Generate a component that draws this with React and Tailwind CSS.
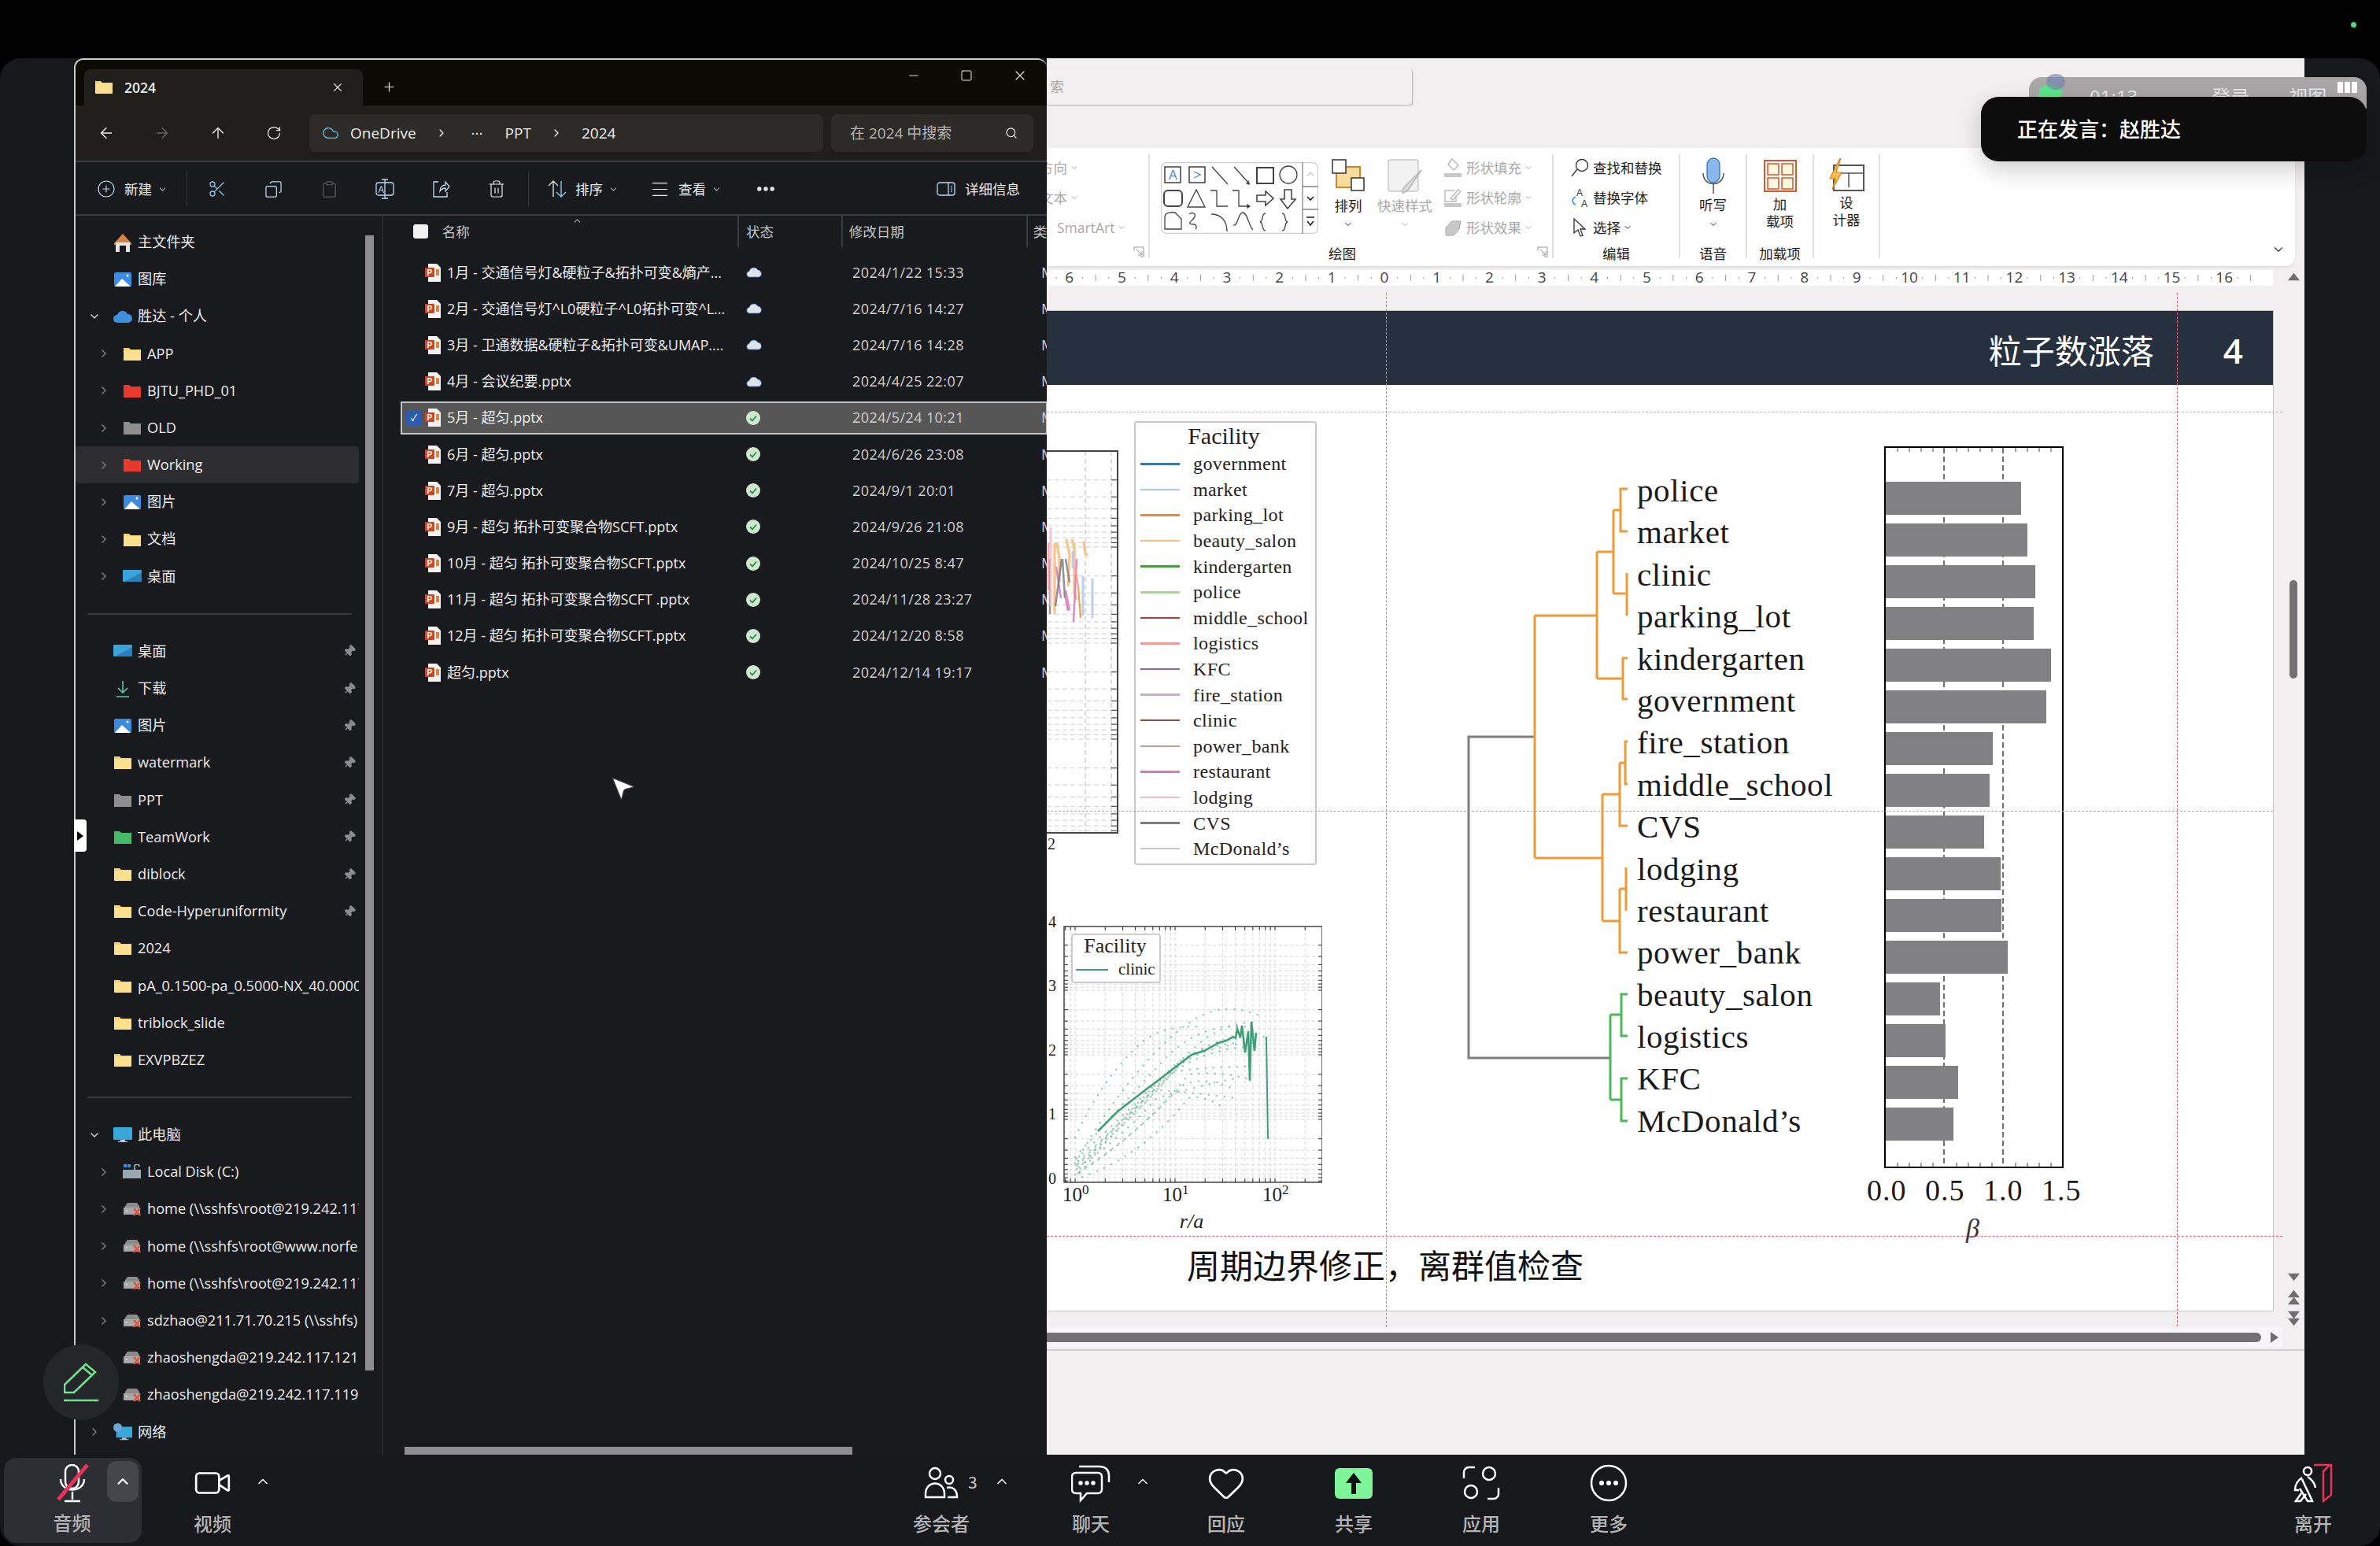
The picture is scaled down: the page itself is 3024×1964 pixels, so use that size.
import React from 'react';
import {
  ArrowLeft, ArrowRight, ArrowUp, RotateCw, Cloud, ChevronRight, ChevronDown, ChevronUp, X, Plus, Minus, Square, Search,
  CirclePlus, Scissors, Copy, Clipboard, Trash2, Menu, Ellipsis, Pin, Video, Heart, MousePointer2,
} from 'lucide-react';

const FOLDER = { y: '#f5cf6c', r: '#e8392f', g: '#8f8e8f', t: '#47b868' };

const Folder = ({ c = 'y', w = 22 }) => (
  <svg width={w} height={w * 0.78} viewBox="0 0 22 17" className="shrink-0">
    <path d="M0 1h7l2 2h13v14H0z" fill={FOLDER[c]} />
    <path d="M0 4h22v13H0z" fill={c === 'y' ? '#fbe08f' : FOLDER[c]} />
  </svg>
);

const Pic = () => (
  <svg width="22" height="20" viewBox="0 0 22 20">
    <rect width="22" height="18" y="1" rx="2" fill="#3d8be0" />
    <path d="M1 19l9-10 11 10z" fill="#fff" />
    <circle cx="17" cy="5" r="1.5" fill="#fff" />
  </svg>
);
const Desk = () => (
  <svg width="24" height="16" viewBox="0 0 24 16">
    <rect width="24" height="15" rx="1" fill="#3ba3dc" />
    <path d="M2 15L24 3v12z" fill="#2a7fc0" />
  </svg>
);
const Home = () => (
  <svg width="24" height="24" viewBox="0 0 24 24">
    <path d="M12 1L1 13v2h22v-2z" fill="#d9823f" />
    <path d="M3 12h18v12h-5v-8H8v8H3z" fill="#e8e4e2" />
  </svg>
);
const OneCloud = () => (
  <svg width="24" height="18" viewBox="0 0 24 18">
    <path d="M5 17a5 5 0 0 1 0-10 7 7 0 0 1 13-1 5.500 5.500 0 0 1 1 11z" fill="#3f8fe0" />
  </svg>
);
const Pc = () => (
  <svg width="24" height="20" viewBox="0 0 24 20">
    <rect width="24" height="16" rx="1" fill="#39a6dc" />
    <path d="M9 16h6v2h3v1H6v-1h3z" fill="#bcd" />
  </svg>
);
const Net = () => (
  <svg width="26" height="24" viewBox="0 0 26 24">
    <rect x="4" y="5" width="22" height="15" fill="#39a6dc" />
    <path d="M12 20h6v2h3v1H9v-1h3z" fill="#bcd" />
    <circle cx="6" cy="6" r="6" fill="#6aa8d8" />
  </svg>
);
const Dl = () => (
  <svg width="20" height="22" viewBox="0 0 20 22" fill="none" stroke="#56c79b" strokeWidth="1.6">
    <path d="M10 1v14M4 10l6 6 6-6M2 21h16" />
  </svg>
);
const Drive = ({ bad = true }) => (
  <svg width="24" height="20" viewBox="0 0 24 20">
    <path d="M3 6l3-4h12l3 4v11H3z" fill="#8a8a8a" />
    <rect x="1" y="8" width="21" height="9" fill="#a8a8a8" />
    <circle cx="5" cy="12" r="1" fill="#ddd" />
    {bad ? <path d="M14 9l8 9M22 9l-8 9" stroke="#d9573f" strokeWidth="2.6" /> : null}
  </svg>
);
const CDrive = () => (
  <svg width="24" height="20" viewBox="0 0 24 20">
    <rect x="1" y="0" width="4" height="4" fill="#3d8be0" />
    <rect x="6" y="0" width="4" height="4" fill="#3d8be0" />
    <rect x="0" y="7" width="23" height="11" fill="#9aa7b0" />
    <circle cx="4" cy="12" r="1" fill="#4ade80" />
    <path d="M15 7V3a3 3 0 0 1 6 0" fill="none" stroke="#9ccbe8" strokeWidth="1.5" />
  </svg>
);
const Ppt = () => (
  <svg width="20" height="23" viewBox="0 0 20 23" className="shrink-0">
    <path d="M4 0h11l5 5v18H4z" fill="#f4f1ee" />
    <rect y="5" width="12" height="12" rx="1" fill="#c8472b" />
    <text x="2.500" y="15" fontSize="10" fontWeight="700" fill="#fff" fontFamily="Liberation Sans">P</text>
    <rect x="14" y="7" width="4" height="8" fill="#e0833f" />
  </svg>
);
const CloudState = () => (
  <svg width="20" height="14" viewBox="0 0 20 14">
    <path d="M4 13a3.800 3.800 0 0 1 0-7.500 6 6 0 0 1 11-1.500 4.600 4.600 0 0 1 1 9z" fill="#dfe4ec" stroke="#3f78c8" strokeWidth="0.8" />
  </svg>
);
const OkState = () => (
  <svg width="18" height="18" viewBox="0 0 18 18">
    <circle cx="9" cy="9" r="9" fill="#cfe6cf" />
    <path d="M5 9.500l3 3 5-6" fill="none" stroke="#2c8f4e" strokeWidth="1.800" />
  </svg>
);

const NAV1 = [
  { t: '主文件夹', i: <Home />, flat: true },
  { t: '图库', i: <Pic />, flat: true },
  { t: '胜达 - 个人', i: <OneCloud />, open: true },
  { t: 'APP', i: <Folder />, l: 1 },
  { t: 'BJTU_PHD_01', i: <Folder c="r" />, l: 1 },
  { t: 'OLD', i: <Folder c="g" />, l: 1 },
  { t: 'Working', i: <Folder c="r" />, l: 1, active: true },
  { t: '图片', i: <Pic />, l: 1 },
  { t: '文档', i: <Folder />, l: 1 },
  { t: '桌面', i: <Desk />, l: 1 },
];
const NAV2 = [
  { t: '桌面', i: <Desk />, pin: true },
  { t: '下载', i: <Dl />, pin: true },
  { t: '图片', i: <Pic />, pin: true },
  { t: 'watermark', i: <Folder />, pin: true },
  { t: 'PPT', i: <Folder c="g" />, pin: true },
  { t: 'TeamWork', i: <Folder c="t" />, pin: true },
  { t: 'diblock', i: <Folder />, pin: true },
  { t: 'Code-Hyperuniformity', i: <Folder />, pin: true },
  { t: '2024', i: <Folder /> },
  { t: 'pA_0.1500-pa_0.5000-NX_40.0000', i: <Folder /> },
  { t: 'triblock_slide', i: <Folder /> },
  { t: 'EXVPBZEZ', i: <Folder /> },
];
const NAV3 = [
  { t: '此电脑', i: <Pc />, open: true },
  { t: 'Local Disk (C:)', i: <CDrive />, l: 1 },
  { t: 'home (\\\\sshfs\\root@219.242.117.121)', i: <Drive />, l: 1 },
  { t: 'home (\\\\sshfs\\root@www.norfe.cn)', i: <Drive />, l: 1 },
  { t: 'home (\\\\sshfs\\root@219.242.117.119)', i: <Drive />, l: 1 },
  { t: 'sdzhao@211.71.70.215 (\\\\sshfs)', i: <Drive />, l: 1 },
  { t: 'zhaoshengda@219.242.117.121 (\\\\sshfs)', i: <Drive />, l: 1, noArrow: true },
  { t: 'zhaoshengda@219.242.117.119 (\\\\sshfs)', i: <Drive />, l: 1, noArrow: true },
  { t: '网络', i: <Net /> },
];

const FILES = [
  ['1月 - 交通信号灯&硬粒子&拓扑可变&熵产...', '2024/1/22 15:33'],
  ['2月 - 交通信号灯^L0硬粒子^L0拓扑可变^L...', '2024/7/16 14:27'],
  ['3月 - 卫通数据&硬粒子&拓扑可变&UMAP....', '2024/7/16 14:28'],
  ['4月 - 会议纪要.pptx', '2024/4/25 22:07'],
  ['5月 - 超匀.pptx', '2024/5/24 10:21', true],
  ['6月 - 超匀.pptx', '2024/6/26 23:08'],
  ['7月 - 超匀.pptx', '2024/9/1 20:01'],
  ['9月 - 超匀 拓扑可变聚合物SCFT.pptx', '2024/9/26 21:08'],
  ['10月 - 超匀 拓扑可变聚合物SCFT.pptx', '2024/10/25 8:47'],
  ['11月 - 超匀 拓扑可变聚合物SCFT .pptx', '2024/11/28 23:27'],
  ['12月 - 超匀 拓扑可变聚合物SCFT.pptx', '2024/12/20 8:58'],
  ['超匀.pptx', '2024/12/14 19:17'],
];

const NavRow = ({ t, i, l = 0, open, pin, active, noArrow, flat }) => (
  <div className={`relative flex h-[47.2px] w-[360px] shrink-0 items-center overflow-hidden rounded-sm ${l ? 'pl-[28px]' : 'pl-[16px]'} ${active ? 'bg-[#2d2d30]' : ''}`}>
    <span className="flex w-[16px] shrink-0 justify-center">
      {flat || noArrow ? null : open ? <ChevronDown size={18} strokeWidth={2.5} color="#c4c4c4" /> : <ChevronRight size={18} strokeWidth={2.5} color="#777" />}
    </span>
    <span className="ml-[16px] flex w-[24px] shrink-0 justify-center">{i}</span>
    <span className="ml-[7px] whitespace-nowrap text-[18.2px] text-[#ececec]">{t}</span>
    {pin ? <Pin size={16} fill="#8c8c8c" color="#8c8c8c" className="absolute left-[340px] rotate-45" /> : null}
  </div>
);

const Explorer = () => (
  <div className="relative flex h-full w-[1236px] shrink-0 flex-col overflow-hidden rounded-tl-xl rounded-tr-xl border-l-2 border-t-2 border-[#c9c9c9] bg-[#191a1e] text-[#ececec]">
    <div className="flex h-[58px] shrink-0 items-end bg-[#0c0a05] pl-[11px]">
      <div className="flex h-[46px] w-[354px] items-center rounded-t-lg bg-[#201e1b] pl-[14px]">
        <Folder />
        <span className="ml-[15px] text-[17.5px] font-semibold">2024</span>
        <X size={18} className="ml-[222px]" strokeWidth={1.5} />
      </div>
      <Plus size={19} className="mb-[14px] ml-[24px]" strokeWidth={1.5} />
      <div className="mb-[28px] ml-auto flex items-center gap-[50px] pr-[24px]">
        <Minus size={18} strokeWidth={1.2} />
        <Square size={16} strokeWidth={1.5} />
        <X size={20} strokeWidth={1.4} />
      </div>
    </div>
    <div className="flex h-[72px] shrink-0 items-center border-b-2 border-[#3a3a3a] bg-[#201e1b] pl-[28px]">
      <ArrowLeft size={22} strokeWidth={1.5} />
      <ArrowRight size={22} strokeWidth={1.5} color="#666" className="ml-[49px]" />
      <ArrowUp size={22} strokeWidth={1.5} className="ml-[49px]" />
      <RotateCw size={20} strokeWidth={1.5} className="ml-[50px]" />
      <div className="ml-[35px] flex h-[48px] w-[653px] items-center rounded-lg bg-[#2d2b28] pl-[16px] text-[19px]">
        <Cloud size={22} color="#6cc0e8" strokeWidth={1.5} />
        <span className="ml-[14px]">OneDrive</span>
        <ChevronRight size={16} className="ml-[24px]" />
        <span className="ml-[30px]">···</span>
        <span className="ml-[28px]">PPT</span>
        <ChevronRight size={16} className="ml-[24px]" />
        <span className="ml-[24px]">2024</span>
      </div>
      <div className="ml-[10px] flex h-[48px] w-[257px] items-center rounded-lg bg-[#2d2b28] pl-[24px] text-[19px] text-[#b4b4b4]">
        在 2024 中搜索
        <Search size={16} className="ml-auto mr-[20px]" color="#ddd" />
      </div>
    </div>
    <div className="flex h-[68px] shrink-0 items-center border-b-2 border-[#3a3a3a] pl-[27px] pt-[2px] text-[17.5px]">
      <CirclePlus size={24} strokeWidth={1.2} color="#b8dcf0" />
      <span className="ml-[11px]">新建</span>
      <ChevronDown size={13} className="ml-[7px]" color="#aaa" />
      <span className="ml-[24px] h-[44px] w-px bg-[#3a3a3a]" />
      <Scissors size={24} strokeWidth={1.3} color="#8cc4ea" className="ml-[26px]" />
      <Copy size={23} strokeWidth={1.3} color="#b8dcf0" className="ml-[48px] -scale-x-100" />
      <Clipboard size={23} strokeWidth={1.3} color="#55585e" className="ml-[48px]" />
      <svg width="26" height="26" viewBox="0 0 26 26" fill="none" stroke="#b8dcf0" strokeWidth="1.300" className="ml-[46px]">
        <rect x="2" y="5" width="22" height="16" rx="3" />
        <path d="M13 1v24M9 1h8M9 25h8" />
        <text x="4.500" y="18" fontSize="12" stroke="none" fill="#b8dcf0">A</text>
      </svg>
      <svg width="24" height="24" viewBox="0 0 24 24" fill="none" stroke="#b8dcf0" strokeWidth="1.300" className="ml-[46px]">
        <path d="M9 3H3v19h17v-6M11 15c0-6 4-8 7-8V3l5 6-5 6v-4c-3 0-5 1-7 4z" />
      </svg>
      <Trash2 size={24} strokeWidth={1.2} className="ml-[47px]" />
      <span className="ml-[28px] h-[44px] w-px bg-[#3a3a3a]" />
      <svg width="26" height="24" viewBox="0 0 26 24" fill="none" strokeWidth="1.400" className="ml-[23px]">
        <path d="M8 22V2M2 8l6-6 6 6" stroke="#e0e0e0" />
        <path d="M18 2v20M12 16l6 6 6-6" stroke="#8cc4ea" />
      </svg>
      <span className="ml-[10px]">排序</span>
      <ChevronDown size={13} className="ml-[7px]" color="#aaa" />
      <Menu size={27} strokeWidth={1.1} className="ml-[39px]" />
      <span className="ml-[10px]">查看</span>
      <ChevronDown size={13} className="ml-[7px]" color="#aaa" />
      <Ellipsis size={28} strokeWidth={2.6} className="ml-[42px]" />
      <svg width="24" height="18" viewBox="0 0 24 18" fill="none" stroke="#b8dcf0" strokeWidth="1.300" className="ml-[203px]">
        <rect x="1" y="1" width="22" height="16" rx="3" />
        <path d="M15 1v16" />
        <path d="M18 6h2M18 9h2M18 12h2" stroke="#8cc4ea" />
      </svg>
      <span className="ml-[12px]">详细信息</span>
    </div>
    <div className="flex min-h-0 flex-1">
      <div className="relative flex w-[368px] shrink-0 flex-col pt-[10px]">
        {NAV1.map((n) => <NavRow key={n.t + (n.l || 0)} {...n} />)}
        <div className="my-[23px] ml-[15px] h-[2px] w-[335px] shrink-0 bg-[#3a3a3a]" />
        {NAV2.map((n) => <NavRow key={n.t} {...n} flat />)}
        <div className="my-[23px] ml-[15px] h-[2px] w-[335px] shrink-0 bg-[#3a3a3a]" />
        {NAV3.map((n) => <NavRow key={n.t} {...n} />)}
      </div>
      <div className="mt-[25px] h-[1442px] w-[11px] shrink-0 bg-[#8f8d90]" />
      <div className="ml-[10px] w-[2px] shrink-0 bg-[#2a2a2d]" />
      <div className="flex min-w-0 flex-1 flex-col">
        <div className="relative flex h-[40px] shrink-0 items-center text-[17.5px] text-[#c4c4c4]">
          <span className="ml-[38px] h-[18px] w-[19px] rounded-[3px] bg-[#f2f2f2]" />
          <span className="ml-[18px] w-[382px]">名称</span>
          <span className="h-full w-[134px] border-l-2 border-[#3a3a3a] pl-[9px] leading-[40px]">状态</span>
          <span className="h-full w-[239px] border-l-2 border-[#3a3a3a] pl-[8px] leading-[40px]">修改日期</span>
          <span className="h-full overflow-hidden border-l-2 border-[#3a3a3a] pl-[7px] leading-[40px]">类</span>
          <ChevronUp size={13} color="#aaa" className="absolute left-[240px] top-0" />
        </div>
        <div className="mt-[9px] flex flex-1 flex-col">
          {FILES.map(([name, date, sel], idx) => (
            <div key={name} className="flex h-[46.200px] shrink-0 items-center pl-[23px]">
              <div className={`flex h-[40px] w-full items-center whitespace-nowrap text-[18px] ${sel ? 'bg-[#565656] outline-2 -outline-offset-1 outline-[#c4c4c4]' : ''}`}>
                <span className="ml-[6px] flex h-[20px] w-[20px] shrink-0 items-center justify-center rounded-[4px]">
                  {sel ? <span className="flex h-[20px] w-[20px] items-center justify-center rounded-[4px] bg-[#2a5db0] text-[12px] text-white">✓</span> : null}
                </span>
                <span className="ml-[4px]"><Ppt /></span>
                <span className="ml-[8px] w-[372px] shrink-0 overflow-hidden text-[#ececec]">{name}</span>
                <span className="ml-[8px] flex w-[135px] shrink-0">{idx < 4 ? <CloudState /> : <OkState />}</span>
                <span className="w-[240px] shrink-0 tracking-[0.4px] text-[#cfcfcf]">{date}</span>
                <span className="text-[#cfcfcf]">M</span>
              </div>
            </div>
          ))}
        </div>
        <div className="ml-[27px] h-[10px] w-[569px] shrink-0 bg-[#8f8d90]" />
      </div>
    </div>
  </div>
);

const Shapes = () => (
  <svg width="200" height="91" viewBox="0 0 200 91" fill="none" stroke="#444" strokeWidth="1.300">
    <rect x="0.500" y="0.500" width="199" height="90" rx="7" stroke="#cfcfcf" />
    <rect x="5" y="6" width="20" height="20" stroke="#222" />
    <text x="10" y="22" fontSize="16" fill="#3d8be0" stroke="none" fontFamily="Liberation Sans">A</text>
    <rect x="36" y="6" width="20" height="20" stroke="#222" />
    <path d="M42 12l8 4-8 4" stroke="#3d8be0" />
    <path d="M65 6l20 22M93 6l20 22M113 28l-4-1 3-3" />
    <rect x="122" y="7" width="21" height="20" strokeWidth="2" />
    <circle cx="162" cy="16" r="11" />
    <rect x="4" y="36" width="23" height="20" rx="5" strokeWidth="2" />
    <path d="M34 57l11-22 11 22zM63 36h8v20h14M91 36h8v20h14M113 56l-3-2v4z" />
    <path d="M122 42h11v-5l10 9-10 9v-5h-11zM157 35h9v12h5l-10 12-9-12h5z" strokeWidth="1.600" />
    <path d="M5 70c0-5 4-6 8-6h5l8 8v13H5zM36 66c5-3 10 0 6 5-4 5-10 8 0 8 3 0 4 4 2 6M64 66c12 0 20 8 20 22M92 80c6 2 6-16 12-16s8 18 13 22M133 65c-6 0-2 10-7 11 5 1 1 11 7 11M154 65c6 0 2 10 7 11-5 1-1 11-7 11" />
    <path d="M180 0v91M180 31h20M180 60h20" stroke="#888" />
    <path d="M186 18l4-5 4 5" stroke="#ccc" />
    <path d="M186 44l4 4 4-4" stroke="#222" strokeWidth="1.600" />
    <path d="M185 70h10M186 75l4 5 4-5" stroke="#222" strokeWidth="1.600" />
  </svg>
);

const RGroup = ({ w, label, labelPad = 0, children, launcher, noBorder }) => (
  <div className={`relative flex h-[132px] shrink-0 flex-col ${noBorder ? '' : 'border-r-2 border-[#e2e0e0]'}`} style={{ width: w }}>
    <div className="flex min-h-0 flex-1">{children}</div>
    <div className="h-[24px] text-center text-[17.500px] leading-[36px] text-[#222]" style={{ paddingRight: labelPad }}>{label}</div>
    {launcher ? (
      <svg width="14" height="14" viewBox="0 0 14 14" fill="none" stroke="#999" className="absolute bottom-[1px] right-[5px]">
        <path d="M1 5V1h12v12H9M4 4l7 7M11 6v5H6" />
      </svg>
    ) : null}
  </div>
);

const RowCmd = ({ icon, text, dim, chev }) => (
  <div className={`flex h-[38px] items-center whitespace-nowrap text-[17.500px] ${dim ? 'text-[#a8a8a8]' : 'text-[#222]'}`}>
    {icon}
    <span className="ml-[6px]">{text}</span>
    {chev ? <ChevronDown size={12} className="ml-[3px]" /> : null}
  </div>
);

const Ribbon = () => (
  <div className="relative flex h-[150px] w-[1586px] items-start rounded-br-xl bg-white py-[8px] pb-[10px] shadow-[0_2px_3px_#0001]">
    <RGroup w={131} launcher>
      <div className="-ml-[15px] -mt-[2px]">
        <RowCmd dim chev text="方向" icon={null} />
        <RowCmd dim chev text="文本" icon={null} />
        <div className="ml-[22px]"><RowCmd dim chev text="SmartArt" icon={null} /></div>
      </div>
    </RGroup>
    <RGroup w={513} label="绘图" labelPad={22} launcher>
      <div className="ml-[14px] mt-[10px]"><Shapes /></div>
      <div className="ml-[13px] flex w-[50px] flex-col items-center text-[17.500px] text-[#222]">
        <svg width="42" height="42" viewBox="0 0 42 42" className="mt-[6px]">
          <rect x="6" y="10" width="30" height="26" fill="#f8dc9c" stroke="#d9822b" strokeWidth="2" />
          <rect x="1" y="1" width="17" height="17" fill="#fff" stroke="#333" strokeWidth="1.500" />
          <rect x="25" y="24" width="16" height="16" fill="#fff" stroke="#333" strokeWidth="1.500" />
        </svg>
        <span className="mt-[4px]">排列</span>
        <ChevronDown size={12} className="mt-[5px]" />
      </div>
      <div className="ml-[9px] flex w-[76px] flex-col items-center text-[17.500px] text-[#a8a8a8]">
        <svg width="46" height="46" viewBox="0 0 46 46" className="mt-[6px]" fill="none" stroke="#c8c8c8" strokeWidth="1.500">
          <rect x="2" y="1" width="38" height="40" rx="3" fill="#f2f2f2" />
          <path d="M44 14L28 38c-2 3-8 5-8 5s0-6 3-8z" fill="#ddd" stroke="#b5b5b5" />
        </svg>
        <span>快速样式</span>
        <ChevronDown size={12} className="mt-[5px]" />
      </div>
      <div className="-mt-[2px] ml-[12px]">
        <RowCmd dim chev text="形状填充" icon={<svg width="22" height="24" viewBox="0 0 22 24"><path d="M10 1l8 8-6 6-7-7z" fill="none" stroke="#bbb" strokeWidth="1.500" /><rect y="19" width="22" height="5" fill="#c8c8c8" /></svg>} />
        <RowCmd dim chev text="形状轮廓" icon={<svg width="22" height="24" viewBox="0 0 22 24"><path d="M1 3h12M1 3v14h14v-8M8 13l10-11 3 2-10 11z" fill="none" stroke="#bbb" strokeWidth="1.400" /><rect y="19" width="22" height="5" fill="#c8c8c8" /></svg>} />
        <RowCmd dim chev text="形状效果" icon={<svg width="22" height="24" viewBox="0 0 22 24"><path d="M2 12l8-8h11l-2 10-7 8H2z" fill="#c8c8c8" stroke="#aaa" /></svg>} />
      </div>
    </RGroup>
    <RGroup w={161} label="编辑">
      <div className="-mt-[2px] ml-[22px]">
        <RowCmd text="查找和替换" icon={<svg width="22" height="24" viewBox="0 0 22 24" fill="none" stroke="#333" strokeWidth="1.300"><circle cx="14" cy="9" r="7.500" /><path d="M8 14L1 23" /></svg>} />
        <RowCmd text="替换字体" icon={<svg width="22" height="26" viewBox="0 0 22 26"><text x="7" y="11" fontSize="12" fill="#333" fontFamily="Liberation Sans">A</text><text x="13" y="25" fontSize="12" fill="#333" fontFamily="Liberation Sans">A</text><path d="M6 12c-5 2-5 8 0 10" fill="none" stroke="#3d8be0" strokeWidth="1.600" /></svg>} />
        <RowCmd chev text="选择" icon={<svg width="22" height="26" viewBox="0 0 22 26" fill="none" stroke="#333" strokeWidth="1.300"><path d="M4 2v18l5-4 3 8 3-1-3-8h6z" /></svg>} />
      </div>
    </RGroup>
    <RGroup w={85} label="语音">
      <div className="flex w-full flex-col items-center text-[17.500px] text-[#222]">
        <svg width="30" height="46" viewBox="0 0 30 46" className="mt-[4px]">
          <rect x="7" y="1" width="16" height="31" rx="8" fill="#8ab8ea" stroke="#3573c0" strokeWidth="1.300" />
          <path d="M2 20c0 18 26 18 26 0" fill="none" stroke="#555" strokeWidth="1.500" />
          <path d="M15 34v12" stroke="#555" strokeWidth="1.500" />
        </svg>
        <span className="mt-[1px]">听写</span>
        <ChevronDown size={12} className="mt-[6px]" />
      </div>
    </RGroup>
    <RGroup w={85} label="加载项">
      <div className="flex w-full flex-col items-center text-[17.500px] leading-[22px] text-[#222]">
        <svg width="42" height="41" viewBox="0 0 42 41" fill="#fff8e0" stroke="#d9552b" strokeWidth="1.500" className="mt-[7px]">
          <rect x="1" y="1" width="40" height="39" fill="#fff" strokeWidth="2" />
          <rect x="5" y="5" width="14" height="14" />
          <rect x="23" y="5" width="14" height="14" />
          <rect x="5" y="23" width="14" height="14" />
          <rect x="23" y="23" width="14" height="14" />
        </svg>
        <span className="mt-[4px]">加</span>
        <span>载项</span>
      </div>
    </RGroup>
    <RGroup w={84}>
      <div className="flex w-full flex-col items-center text-[17.500px] leading-[22px] text-[#222]">
        <svg width="46" height="42" viewBox="0 0 46 42" className="mt-[5px]">
          <rect x="7" y="9" width="38" height="32" fill="#fff" stroke="#555" strokeWidth="2" />
          <path d="M7 19h38M26 19v18" stroke="#555" strokeWidth="1.500" />
          <path d="M15 0L2 26h7l-4 14 12-22h-7l6-18z" fill="#f5c04a" stroke="#d9822b" strokeWidth="1.200" />
        </svg>
        <span className="mt-[3px]">设</span>
        <span>计器</span>
      </div>
    </RGroup>
    <ChevronDown size={18} strokeWidth={1.5} color="#333" className="absolute bottom-[12px] right-[12px]" />
  </div>
);

const Ruler = () => {
  const nums = [];
  for (let i = -6; i <= 16; i++) nums.push(i);
  const ticks = [];
  for (let q = -28; q <= 66; q++) if (q % 4 !== 0) ticks.push(q);
  return (
    <svg width="1558" height="20" viewBox="0 0 1558 20" className="block bg-white">
      {ticks.map((q) => {
        const x = 429 + q * 16.675;
        return <line key={q} x1={x} x2={x} y1={q % 2 === 0 ? 6 : 9} y2={q % 2 === 0 ? 14 : 11} stroke="#999" />;
      })}
      {nums.map((n) => (
        <text key={n} x={429 + n * 66.7} y="16" textAnchor="middle" fontSize="19" fill="#444" fontFamily="Open Sans">{Math.abs(n)}</text>
      ))}
    </svg>
  );
};

const LEGEND = [
  ['government', '#3b76af'], ['market', '#b1c6e5'], ['parking_lot', '#f0872f'], ['beauty_salon', '#f6bd80'],
  ['kindergarten', '#499a41'], ['police', '#a5d88f'], ['middle_school', '#c63637'], ['logistics', '#f29a98'],
  ['KFC', '#8a67b8'], ['fire_station', '#c0b0d2'], ['clinic', '#875349'], ['power_bank', '#bf9b95'],
  ['restaurant', '#d877bd'], ['lodging', '#f1b9d1'], ['CVS', '#7f7f7f'], ['McDonald’s', '#c6c6c6'],
];

const logGrid = (start, span, count) => {
  const out = [];
  for (let d = 0; d < count; d++) {
    for (let k = 1; k < 10; k++) out.push(start + d * span + span * Math.log10(k));
  }
  return out;
};

const ClippedChart = () => {
  const ys = [...logGrid(573, 122, 4)].filter((y) => y < 1058);
  const sq = [
    ['#f6bd80', 'M1340 690v90M1343 690l3 20v30M1355 685l4 20-2 40M1365 690v60l3 12M1362 685l3 12M1377 688l2 15 3 3', 3.500],
    ['#b1c6e5', 'M1363 700v22M1376 732v50M1388 735v50', 3],
    ['#d877bd', 'M1342 720l6 40M1354 760l3 16M1354 750l5 25M1368 710l-4 80', 2.500],
    ['#7f7f7f', 'M1334 710v70M1341 770l8-60M1350 710l3 50M1354 710l5 30', 2.500],
    ['#f1b9d1', 'M1335 670v100', 3],
    ['#f29a98', 'M1332 690v60M1366 720l4 25', 2.500],
    ['#f0872f', 'M1370 745l3 40', 2],
  ];
  return (
    <svg width="92" height="550" viewBox="1330 535 92 550" className="block shrink-0" fontFamily="Liberation Serif">
      {ys.map((y) => <line key={y} x1="1330" x2="1420" y1={y} y2={y} stroke="#cfcfcf" strokeDasharray="6 4" />)}
      <path d="M1379 573v485M1412 573v485" stroke="#cfcfcf" strokeWidth="1.500" strokeDasharray="6 4" />
      {ys.map((y) => <line key={`t${y}`} x1="1412" x2="1420" y1={y} y2={y} stroke="#333" />)}
      {sq.map(([c, d, w]) => <path key={d} d={d} fill="none" stroke={c} strokeWidth={w} opacity="0.850" />)}
      <path d="M1330 573h90v485h-90" fill="none" stroke="#444" strokeWidth="2" />
      <text x="1336" y="1079" fontSize="20" fill="#222" textAnchor="middle">2</text>
    </svg>
  );
};

const SmallChart = () => {
  const xs = logGrid(1239, 127, 4).filter((x) => x > 1352 && x < 1680);
  const ys = logGrid(1176, 82, 4).filter((y) => y > 1177 && y < 1502);
  const dotted = [
    'M1366 1492Q1440 1400 1530 1320Q1570 1295 1600 1300',
    'M1366 1478Q1440 1350 1510 1300Q1550 1270 1600 1290',
    'M1366 1445Q1400 1370 1450 1325Q1480 1300 1530 1305',
    'M1366 1470Q1420 1410 1480 1345Q1530 1295 1590 1305',
    'M1368 1485Q1440 1420 1500 1352Q1540 1325 1600 1325',
    'M1368 1480Q1430 1430 1490 1362Q1530 1355 1590 1355',
    'M1370 1490Q1450 1440 1510 1365Q1550 1360 1590 1372',
    'M1372 1488Q1440 1445 1500 1380Q1530 1365 1570 1385',
    'M1370 1482Q1420 1450 1470 1395Q1520 1380 1570 1370',
    'M1370 1475Q1420 1430 1465 1385Q1490 1385 1570 1395',
    'M1375 1495Q1450 1470 1510 1395Q1530 1390 1555 1408',
    'M1372 1490Q1430 1420 1490 1360Q1540 1310 1610 1318',
    'M1368 1472Q1430 1415 1490 1355Q1520 1330 1570 1325',
    'M1370 1478Q1425 1425 1490 1362Q1530 1335 1580 1330',
  ];
  const solid = '1395,1437 1420,1412 1451,1388 1480,1366 1514,1340 1530,1335 1548,1325 1558,1322 1567,1317 1570,1319 1572,1307 1576,1318 1578,1303 1582,1337 1586,1310 1588,1373 1590,1298 1594,1335 1596,1312';
  return (
    <svg width="350" height="405" viewBox="1330 1160 350 405" className="block" fontFamily="Liberation Serif">
      {xs.map((x) => <line key={x} x1={x} x2={x} y1="1177" y2="1502" stroke="#d8d8d8" strokeDasharray="4 3" />)}
      {ys.map((y) => <line key={y} x1="1352" x2="1680" y1={y} y2={y} stroke="#d8d8d8" strokeDasharray="4 3" />)}
      {dotted.map((d) => <path key={d} d={d} fill="none" stroke="#5fae90" strokeWidth="2.500" strokeDasharray="0.100 10" strokeLinecap="round" opacity="0.650" />)}
      <polyline points={solid} fill="none" stroke="#3f9e78" strokeWidth="2.500" />
      <path d="M1609 1317L1611 1447" stroke="#3f9e78" strokeWidth="2" />
      {xs.map((x) => <line key={`t${x}`} x1={x} x2={x} y1="1177" y2="1182" stroke="#333" />)}
      {xs.map((x) => <line key={`b${x}`} x1={x} x2={x} y1="1497" y2="1502" stroke="#333" />)}
      {ys.map((y) => <line key={`l${y}`} x1="1352" x2="1357" y1={y} y2={y} stroke="#333" />)}
      {ys.map((y) => <line key={`r${y}`} x1="1675" x2="1680" y1={y} y2={y} stroke="#333" />)}
      <rect x="1352" y="1177" width="328" height="325" fill="none" stroke="#444" strokeWidth="1.500" />
      <rect x="1362" y="1187" width="112" height="61" rx="3" fill="#fff" stroke="#ccc" strokeWidth="2" />
      <text x="1417" y="1210" fontSize="26" textAnchor="middle" fill="#222">Facility</text>
      <path d="M1367 1232h41" stroke="#3f9e78" strokeWidth="2" />
      <text x="1421" y="1238" fontSize="21" fill="#222">clinic</text>
      {[['4', 1178], ['3', 1259], ['2', 1341], ['1', 1422], ['0', 1504]].map(([t, y]) => (
        <text key={t} x="1337" y={y} fontSize="20" fill="#222" textAnchor="middle">{t}</text>
      ))}
      {[['0', 1350], ['1', 1477], ['2', 1604]].map(([t, x]) => (
        <text key={t} x={x} y="1526" fontSize="25" fill="#222">10<tspan dy="-9" fontSize="17">{t}</tspan></text>
      ))}
      <text x="1514" y="1560" fontSize="26" fontStyle="italic" fill="#222" textAnchor="middle">r/a</text>
    </svg>
  );
};

const Dendro = () => (
  <svg width="210" height="860" viewBox="1860 597 210 860" className="block shrink-0" fill="none" strokeWidth="3">
    <path d="M1950 936H1866V1344H2046" stroke="#7f7f7f" />
    <path d="M1950 782V1090M1950 782H2029M2029 701V862M2029 701H2050M2050 648V754M2050 648H2059M2068 621H2059V675H2068M2050 754H2067M2067 728V782M2029 862H2062M2068 836H2062V888H2068M1950 1090H2036M2036 1009V1170M2036 1009H2058M2058 969V1049H2068M2058 969H2065M2068 942H2065V996H2068M2036 1170H2058M2058 1129V1210H2068M2058 1129H2066M2066 1102V1157" stroke="#f09a36" />
    <path d="M2046 1289V1397M2046 1289H2060M2068 1263H2060V1316H2068M2046 1397H2060M2068 1370H2060V1424H2068" stroke="#4cb857" />
  </svg>
);

const LABELS = ['police', 'market', 'clinic', 'parking_lot', 'kindergarten', 'government', 'fire_station', 'middle_school', 'CVS', 'lodging', 'restaurant', 'power_bank', 'beauty_salon', 'logistics', 'KFC', 'McDonald’s'];
const BETA = [172, 180, 190, 188, 210, 204, 136, 132, 125, 146, 147, 155, 69, 76, 92, 86];

const BarChart = () => (
  <div className="-ml-[2px] shrink-0">
    <div className="relative flex h-[917px] w-[228px] flex-col gap-[11px] border-2 border-black pt-[43px]">
      <svg width="224" height="913" viewBox="0 0 224 913" className="absolute left-0 top-0" fill="none" stroke="#444">
        <path d="M74 0v913M149 0v913" strokeWidth="1.500" strokeDasharray="7 4" />
        {[15, 30, 45, 60, 90, 105, 120, 135, 165, 180, 195, 210].map((x) => (
          <path key={x} d={`M${x} 0v5M${x} 908v5`} />
        ))}
      </svg>
      {BETA.map((w, i) => (
        <div key={LABELS[i]} className="relative h-[42px] shrink-0 bg-[#818082]" style={{ width: w }} />
      ))}
    </div>
    <div className="relative -ml-[22px] mt-[6px] flex w-[300px] font-['Liberation_Serif',serif] text-[38px] leading-[44px] tracking-[1px] text-[#1a1a1a]">
      <span className="w-[74px] whitespace-nowrap">0.0</span>
      <span className="w-[74px] whitespace-nowrap">0.5</span>
      <span className="w-[74px] whitespace-nowrap">1.0</span>
      <span className="w-[74px] whitespace-nowrap">1.5</span>
    </div>
    <div className="ml-[104px] mt-[7px] font-['Liberation_Serif',serif] text-[34px] italic leading-[40px] text-[#333]">β</div>
  </div>
);

const Slide = () => (
  <div className="flex h-[1270px] w-[1558px] flex-col bg-white outline outline-1 outline-[#c9c7c9]">
    <div className="flex h-[94px] shrink-0 items-center justify-end bg-[#26303f] pr-[38px] pt-[6px] text-white">
      <span className="text-[42px]">粒子数涨落</span>
      <span className="ml-[88px] text-[44px] font-semibold">4</span>
    </div>
    <div className="flex flex-1">
      <div className="w-[350px] shrink-0 pt-[46px]">
        <div className="flex items-start">
          <ClippedChart />
          <div className="ml-[19px] flex h-[564px] w-[232px] flex-col rounded border-2 border-[#c8c8c8] bg-white pl-[6px] font-['Liberation_Serif',serif] text-[#222]">
            <div className="mb-[3px] mt-[1px] pr-[10px] text-center text-[30px] leading-[32px]">Facility</div>
            {LEGEND.map(([t, c]) => (
              <div key={t} className="flex h-[32.600px] shrink-0 items-center text-[24px] tracking-[0.4px]">
                <span className="h-[2.500px] w-[50px] shrink-0" style={{ background: c }} />
                <span className="ml-[17px] whitespace-nowrap">{t}</span>
              </div>
            ))}
          </div>
        </div>
        <div className="mt-[61px]"><SmallChart /></div>
        <div className="ml-[178px] mt-[13px] whitespace-nowrap text-[42px] leading-[60px] text-[#111]">周期边界修正，离群值检查</div>
      </div>
      <div className="ml-[180px] flex flex-col">
        <div className="flex pt-[108px]">
          <Dendro />
          <div className="ml-[10px] flex w-[316px] flex-col font-['Liberation_Serif',serif] text-[41px] tracking-[0.6px] text-[#1a1a1a]">
            {LABELS.map((t) => <div key={t} className="h-[53.400px] leading-[53px]">{t}</div>)}
          </div>
        </div>
      </div>
      <div className="pt-[78px]"><BarChart /></div>
    </div>
  </div>
);

const Caret = ({ dir }) => (
  <svg width="15" height="11" viewBox="0 0 14 9" fill="#6f6d70">
    {dir === 'up' ? <path d="M7 0l7 9H0z" /> : <path d="M7 9L0 0h14z" />}
  </svg>
);

const Powerpoint = () => (
  <div className="relative flex h-full w-[1598px] shrink-0 flex-col overflow-hidden bg-[#f1eff0]">
    <div className="h-[114px] shrink-0 pt-[13px]">
      <div className="flex h-[46px] w-[464px] items-center rounded-r bg-[#f1efef] pl-[4px] text-[18px] text-[#aaa] shadow-[1px_1px_2px_#0004]">索</div>
    </div>
    <Ribbon />
    <div className="mt-[5px] flex">
      <div className="w-[1558px] shrink-0">
        <Ruler />
        <div className="h-[32px]" />
        <Slide />
      </div>
      <div className="flex w-[40px] flex-col items-center pl-[12px] pt-[3px]">
        <Caret dir="up" />
        <div className="mt-[380px] h-[125px] w-[10px] rounded-full bg-[#727073]" />
        <div className="mt-[755px]"><Caret /></div>
        <div className="mt-[10px]"><Caret dir="up" /></div>
        <div className="-mt-[2px]"><Caret dir="up" /></div>
        <div className="mt-[7px]"><Caret /></div>
        <div className="-mt-[2px]"><Caret /></div>
      </div>
    </div>
    <div className="mt-[1px] flex h-[25px] w-[1570px] shrink-0 items-center bg-[#f7f5f7]">
      <div className="h-[12px] w-[1543px] rounded-r-full bg-[#727073]" />
      <svg width="10" height="14" viewBox="0 0 10 14" fill="#6f6d70" className="ml-[12px]"><path d="M0 0l10 7-10 7z" /></svg>
    </div>
    <div className="mt-[3px] h-[2px] bg-[#cfcdcf]" />

    <div className="absolute bottom-[162px] left-[431px] top-[298px] border-l border-dashed border-[#999]" />
    <div className="absolute bottom-[163px] left-[1436px] top-[298px] border-l border-dashed border-[#e8606f]" />
    <div className="absolute left-0 top-[449px] w-[1570px] border-t border-dashed border-[#e6b84a]" />
    <div className="absolute left-0 top-[956px] w-[1558px] border-t border-dashed border-[#aaa]" />
    <div className="absolute left-0 top-[1496px] w-[1570px] border-t border-dashed border-[#e8606f]" />
  </div>
);

const Tool = ({ label, children, ml, caret, caretLeft, extra }) => (
  <div className="relative flex w-[100px] shrink-0 flex-col items-center pt-[8px]" style={{ marginLeft: ml }}>
    <div className="flex h-[56px] items-center justify-center">{children}</div>
    <div className="mt-[7px] text-[24px] font-medium leading-[32px] text-[#b4b4b4]">{label}</div>
    {extra}
    {caret ? <ChevronUp size={20} color="#eee" className="absolute top-[24px]" style={{ left: caretLeft }} /> : null}
  </div>
);

const ToolBar = () => (
  <div className="flex h-[116px] shrink-0 items-start bg-[#17181c] font-['Noto_Sans_CJK_SC',sans-serif]">
    <div className="relative ml-[5px] mt-[4px] flex h-[108px] w-[175px] flex-col items-center rounded-2xl bg-[#2d2e33] pr-[2px]">
      <svg width="48" height="50" viewBox="0 0 48 50" fill="none" stroke="#fff" strokeWidth="2.500" className="mt-[7px]">
        <rect x="15" y="2" width="17" height="30" rx="8.500" />
        <path d="M9 20c0 18 30 18 30 0M24 36v10M14 48h20" />
        <path d="M43 2L6 46" stroke="#e8325a" strokeWidth="5" />
      </svg>
      <div className="mt-[9px] text-[24px] font-medium leading-[32px] text-[#b4b4b4]">音频</div>
      <div className="absolute left-[131px] top-[4px] flex h-[52px] w-[40px] items-center justify-center rounded-xl bg-[#45464b]">
        <ChevronUp size={22} color="#fff" strokeWidth={2.5} />
      </div>
    </div>
    <Tool label="视频" ml={40} caret caretLeft={104}>
      <Video size={50} color="#fff" strokeWidth={1.300} />
    </Tool>
    <Tool label="参会者" ml={826} caret caretLeft={117} extra={<span className="absolute left-[84px] top-[19px] text-[21px] text-[#c8c8c8]">3</span>}>
      <svg width="44" height="44" viewBox="0 0 44 44" fill="none" stroke="#fff" strokeWidth="2.500">
        <circle cx="14" cy="10" r="7" />
        <path d="M2 36c0-18 24-18 24 0v4H2z" />
        <circle cx="32" cy="18" r="5" />
        <path d="M29 28c8-2 13 3 13 12H30" />
      </svg>
    </Tool>
    <Tool label="聊天" ml={90} caret caretLeft={106}>
      <svg width="50" height="50" viewBox="0 0 50 50" fill="none" stroke="#fff" strokeWidth="2.500">
        <path d="M10 4h26c8 0 12 5 12 11v9" />
        <path d="M6 12h28c3 0 5 2 5 5v16c0 3-2 5-5 5H20l-8 9v-9H6c-3 0-5-2-5-5V17c0-3 2-5 5-5z" />
        <circle cx="12" cy="25" r="1.500" fill="#fff" />
        <circle cx="20" cy="25" r="1.500" fill="#fff" />
        <circle cx="28" cy="25" r="1.500" fill="#fff" />
      </svg>
    </Tool>
    <Tool label="回应" ml={72}>
      <Heart size={50} color="#fff" strokeWidth={1.300} />
    </Tool>
    <Tool label="共享" ml={62}>
      <div className="flex h-[39px] w-[48px] items-center justify-center rounded-md bg-[#7ff59a]">
        <svg width="24" height="30" viewBox="0 0 24 30" fill="#111"><path d="M12 2L2 15h7v14h6V15h7z" /></svg>
      </div>
    </Tool>
    <Tool label="应用" ml={62}>
      <svg width="48" height="44" viewBox="0 0 48 44" fill="none" stroke="#fff" strokeWidth="2.500">
        <path d="M2 16V8c0-3 3-6 6-6h8M32 42h8c3 0 6-3 6-6v-8" />
        <circle cx="34" cy="10" r="8" />
        <circle cx="11" cy="33" r="8" />
      </svg>
    </Tool>
    <Tool label="更多" ml={62}>
      <svg width="50" height="50" viewBox="0 0 50 50" fill="none" stroke="#fff" strokeWidth="2.500">
        <circle cx="25" cy="25" r="22" />
        <circle cx="16" cy="25" r="1.800" fill="#fff" />
        <circle cx="25" cy="25" r="1.800" fill="#fff" />
        <circle cx="34" cy="25" r="1.800" fill="#fff" />
      </svg>
    </Tool>
    <div className="ml-auto mr-[35px]">
      <Tool label="离开" ml={0}>
        <svg width="50" height="50" viewBox="0 0 50 50" fill="none" stroke="#fff" strokeWidth="2.500">
          <path d="M26 2h22v38L38 48V10L46 2" stroke="#e8325a" />
          <circle cx="18" cy="10" r="5" />
          <path d="M11 18c-6 4-9 10-9 16h5M18 17c6 4 9 8 10 14M11 20c3 8 7 14 13 28h-6L8 32" />
          <path d="M10 38L3 48h6l7-9" />
        </svg>
      </Tool>
    </div>
  </div>
);

export default function App() {
  return (
    <div className="relative h-[1964px] w-[3024px] overflow-hidden bg-black font-['Open_Sans','Noto_Sans_CJK_SC',sans-serif]">
      <div className="flex h-[74px] justify-end pr-[30px] pt-[28px]">
        <span className="h-[7px] w-[7px] rounded-full bg-[#4ade80]" />
      </div>
      <div className="flex h-[1890px] flex-col overflow-hidden rounded-[26px] bg-[#17181c]">
        <div className="flex h-[1774px] shrink-0 pl-[94px]">
          <Explorer />
          <Powerpoint />
        </div>
        <ToolBar />
      </div>

      {/* things sitting on top of the shared screen */}
      <div className="absolute left-[94px] top-[1041px] flex h-[41px] w-[16px] items-center justify-center rounded-r bg-white">
        <span className="h-0 w-0 border-y-[6px] border-l-[8px] border-y-transparent border-l-black" />
      </div>
      <div className="absolute left-[55px] top-[1708px] flex h-[96px] w-[96px] items-center justify-center rounded-full bg-[#25262a]">
        <svg width="44" height="50" viewBox="0 0 44 50" fill="none" stroke="#6fe08c" strokeWidth="2.500">
          <path d="M1 38V28L28 2l12 10-27 26zM24 6l12 10M0 48h44" />
        </svg>
      </div>
      <MousePointer2 size={38} fill="#fff" color="#333" strokeWidth={1} className="absolute left-[772px] top-[982px]" />

      <div className="absolute left-[2578px] top-[98px] flex h-[40px] w-[429px] items-start overflow-hidden rounded-t-2xl bg-[#a9a7a8] text-[24px] leading-[38px] text-[#e8e8e8]">
        <svg width="30" height="34" viewBox="0 0 30 34" className="ml-[12px] mt-[8px] shrink-0"><path d="M15 0l14 6v12c0 8-7 13-14 16C8 31 1 26 1 18V6z" fill="#5ee58b" /></svg>
        <span className="ml-[63px] mt-[6px] -translate-x-[28px]">01:13</span>
        <span className="ml-[66px] mt-[6px]">登录</span>
        <span className="ml-[50px] mt-[6px]">视图</span>
        <span className="ml-[14px] mt-[6px] flex gap-[2px]">
          <span className="h-[14px] w-[7px] bg-white" />
          <span className="h-[14px] w-[7px] bg-white" />
          <span className="h-[14px] w-[7px] bg-white" />
        </span>
      </div>
      <div className="absolute left-[2600px] top-[94px] h-[20px] w-[24px] rounded-full bg-[#6f7fae]/60" />
      <div className="absolute left-[2517px] top-[123px] flex h-[82px] w-[490px] items-center rounded-[22px] bg-[#0d0d0d] pl-[46px] text-[26px] font-medium text-white shadow-[0_10px_30px_#0003]">
        正在发言：赵胜达
      </div>
    </div>
  );
}
